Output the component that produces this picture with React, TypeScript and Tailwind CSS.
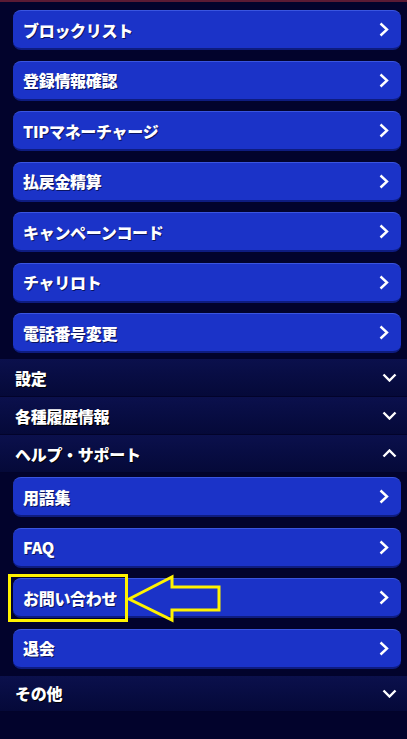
const font = { fontFamily: '"Noto Sans CJK JP", "Noto Sans", sans-serif' }

const topItems = [
  'ブロックリスト',
  '登録情報確認',
  'TIPマネーチャージ',
  '払戻金精算',
  'キャンペーンコード',
  'チャリロト',
  '電話番号変更',
]

const helpItems = ['用語集', 'FAQ', 'お問い合わせ', '退会']

function ArrowRight() {
  return (
    <svg width="10" height="15" viewBox="0 0 10 15" className="shrink-0">
      <polyline points="1.5,1.5 8,7.5 1.5,13.5" fill="none" stroke="#fff" strokeWidth="2.4" />
    </svg>
  )
}

function ArrowToggle({ up }: { up?: boolean }) {
  return (
    <svg width="15" height="9" viewBox="0 0 15 9" className="shrink-0">
      <polyline
        points={up ? '1.5,7.5 7.5,1.5 13.5,7.5' : '1.5,1.5 7.5,7.5 13.5,1.5'}
        fill="none"
        stroke="#fff"
        strokeWidth="2.4"
      />
    </svg>
  )
}

function MenuButton({ label, marked }: { label: string; marked?: boolean }) {
  return (
    <div className="relative ml-[13px] mr-[6px] flex h-[40px] items-center justify-between rounded-[8px] border-t border-t-[#3a55e0] border-b-2 border-b-[#0e1c80] bg-[#1b33c8] pl-[10px] pr-[12px]">
      <span className="text-[16px] font-black leading-none tracking-[-0.3px] text-white [text-shadow:1px_1px_0_#0a1460]">
        {label}
      </span>
      <ArrowRight />
      {marked && (
        <>
          <div className="absolute left-[-5px] top-[-5px] h-[48px] w-[120px] border-[3px] border-[#fff200]" />
          <svg
            className="absolute left-[112px] top-[-5px]"
            width="110"
            height="50"
            viewBox="0 0 110 50"
          >
            <polygon
              points="4,25 47,3 47,13 94,13 94,36 47,36 47,46"
              fill="none"
              stroke="#fff200"
              strokeWidth="3"
            />
          </svg>
        </>
      )}
    </div>
  )
}

function SectionHeader({ label, open, h = 'h-[38px]' }: { label: string; open?: boolean; h?: string }) {
  return (
    <div
      className={`flex ${h} items-center justify-between border-b border-b-[#02032a] bg-gradient-to-b from-[#0b104c] to-[#050939] pl-[15px] pr-[10px]`}
    >
      <span className="text-[16px] font-black leading-none tracking-[-0.3px] text-white [text-shadow:1px_1px_0_#000]">
        {label}
      </span>
      <ArrowToggle up={open} />
    </div>
  )
}

export default function App() {
  return (
    <div className="min-h-[739px] w-[407px] bg-[#02032c]" style={font}>
      <div className="h-[2px] bg-[#5a1a34]" />
      <div className="flex flex-col gap-[10.5px] pt-[8px]">
        {topItems.map(item => (
          <MenuButton key={item} label={item} />
        ))}
      </div>
      <div className="mt-[6px]">
        <SectionHeader label="設定" />
        <SectionHeader label="各種履歴情報" />
        <SectionHeader label="ヘルプ・サポート" open />
      </div>
      <div className="flex flex-col gap-[10.5px] pt-[4px] pb-[7px]">
        {helpItems.map(item => (
          <MenuButton key={item} label={item} marked={item === 'お問い合わせ'} />
        ))}
      </div>
      <SectionHeader label="その他" h="h-[36px]" />
    </div>
  )
}
